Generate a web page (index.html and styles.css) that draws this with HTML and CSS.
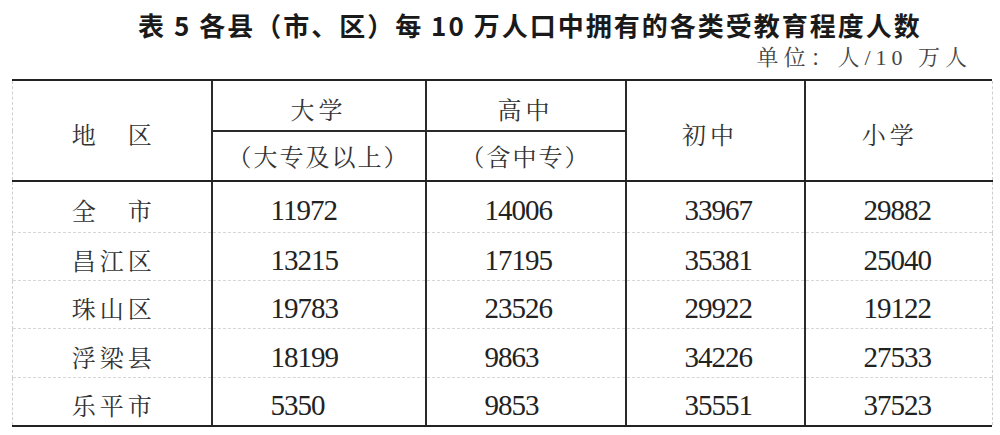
FILE: index.html
```html
<!DOCTYPE html>
<html lang="zh">
<head>
<meta charset="utf-8">
<link rel="stylesheet" href="styles.css">
</head>
<body>
<div class="page">
  <h1 class="title">表 5 各县（市、区）每 10 万人口中拥有的各类受教育程度人数</h1>
  <div class="unit">单位：人/10 万人</div>
  <div class="table-wrap">
  <table class="data">
    <colgroup>
      <col class="c1"><col class="c2"><col class="c3"><col class="c4"><col class="c5">
    </colgroup>
    <thead>
      <tr class="h1">
        <th rowspan="2" class="first">地　区</th>
        <th>大学</th>
        <th>高中</th>
        <th rowspan="2" class="mid">初中</th>
        <th rowspan="2" class="last">小学</th>
      </tr>
      <tr class="h2">
        <th>（大专及以上）</th>
        <th>（含中专）</th>
      </tr>
    </thead>
    <tbody>
      <tr class="r1"><td class="first">全　市</td><td class="num">11972</td><td class="num">14006</td><td class="num">33967</td><td class="num last">29882</td></tr>
      <tr class="r2"><td class="first">昌江区</td><td class="num">13215</td><td class="num">17195</td><td class="num">35381</td><td class="num last">25040</td></tr>
      <tr class="r3"><td class="first">珠山区</td><td class="num">19783</td><td class="num">23526</td><td class="num">29922</td><td class="num last">19122</td></tr>
      <tr class="r4"><td class="first">浮梁县</td><td class="num">18199</td><td class="num">9863</td><td class="num">34226</td><td class="num last">27533</td></tr>
      <tr class="r5"><td class="first">乐平市</td><td class="num">5350</td><td class="num">9853</td><td class="num">35551</td><td class="num last">37523</td></tr>
    </tbody>
  </table>
  </div>
</div>
</body>
</html>
```

FILE: styles.css
```css
html, body {
  margin: 0;
  padding: 0;
  background: #ffffff;
}

.page {
  width: 1000px;
  height: 435px;
  padding: 0 8px 0 12px;
  box-sizing: border-box;
  overflow: hidden;
}

.title {
  margin: 0;
  padding: 8px 0 0 126px;
  height: 37px;
  box-sizing: border-box;
  font-family: "Noto Sans CJK SC", "Noto Sans", sans-serif;
  font-weight: 700;
  font-size: 26px;
  line-height: 34px;
  letter-spacing: 2px;
  color: #1a1a1a;
  white-space: nowrap;
}

.unit {
  height: 42px;
  box-sizing: border-box;
  padding: 6px 20px 0 0;
  text-align: right;
  font-family: "Liberation Serif", "Noto Serif CJK SC", "Noto Sans CJK SC", serif;
  font-size: 22px;
  line-height: 30px;
  letter-spacing: 5px;
  color: #444;
}

.table-wrap {
  width: 980px;
  border-top: 2px solid #222;
  border-bottom: 2px solid #222;
}

.data {
  width: 980px;
  border-collapse: collapse;
  table-layout: fixed;
}

.c1 { width: 199px; }
.c2 { width: 214px; }
.c3 { width: 200px; }
.c4 { width: 179px; }
.c5 { width: 188px; }

.data th,
.data td {
  padding: 0;
  border-left: 2px solid #2a2a2a;
  border-right: 2px solid #2a2a2a;
  font-family: "Noto Serif CJK SC", "Noto Sans CJK SC", serif;
  font-weight: 400;
  color: #333;
  text-align: center;
  vertical-align: middle;
}

.data th {
  font-size: 24px;
  letter-spacing: 4px;
  line-height: 30px;
}

.data .first {
  border-left: 1px dashed #cfcfcf;
}

.data .last {
  border-right: 1px dashed #cfcfcf;
}

.h1 { height: 50px; }
.h1 th { padding-top: 7px; }
.h2 { height: 50px; }
.h2 th { letter-spacing: 2px; }

.h1 th.first,
.h1 th.mid,
.h1 th.last { padding-top: 6px; }

.h1 th.first { padding-left: 4px; }
.h1 th.mid { padding-right: 10px; }
.h1 th.last { padding-right: 18px; }

.h1 th:not([rowspan]) {
  border-bottom: 2px solid #2a2a2a;
}

thead tr.h2 th,
thead tr.h1 th[rowspan] {
  border-bottom: 2px solid #222;
}

.data td {
  font-size: 24px;
  line-height: 30px;
  padding-top: 8px;
  border-top: 1px dashed #d6d6d6;
}

.data td.first {
  letter-spacing: 4px;
  padding-left: 4px;
}

.data td.num {
  text-align: left;
  padding-left: 58px;
  font-family: "Liberation Serif", serif;
  font-size: 29px;
  letter-spacing: -1px;
  color: #222;
}

.r1 { height: 51px; }
.r2 { height: 48px; }
.r3 { height: 48px; }
.r4 { height: 49px; }
.r5 { height: 48px; }

.r1 td { padding-top: 6px; }

tbody tr.r1 td { border-top: 2px solid #222; }
```
